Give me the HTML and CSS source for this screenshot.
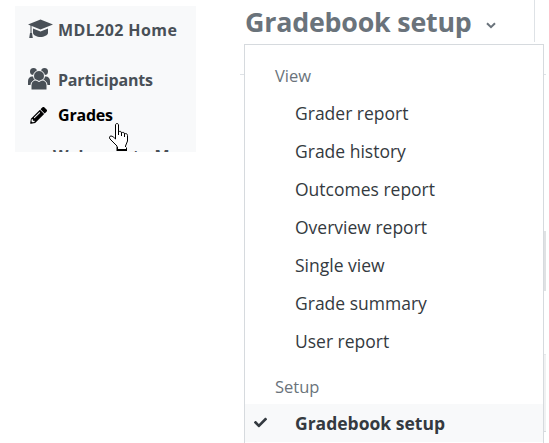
FILE: index.html
```html
<!DOCTYPE html>
<html lang="en">
<head>
  <meta charset="UTF-8" />
  <title>Gradebook setup</title>
  <link rel="stylesheet" href="styles.css">
</head>
<body>
  <aside class="sidebar">
    <a class="side-link home" href="#">
      <svg class="side-icon hat" viewBox="0 0 25 19"><path d="M12.500 .5 25 5.500 12.500 10.500 0 5.500z"/><path d="M5 9.500 12.500 12.500 20 9.500V14c0 2-4 4-7.500 4S5 16 5 14z"/><path d="M2.500 6h1v8h-1z"/><path d="M2 14h2l.8 5H1.200z"/></svg>
      <span>MDL202 Home</span>
    </a>
    <a class="side-link people" href="#">
      <svg class="side-icon group" viewBox="0 0 22 23"><circle cx="5.500" cy="4.500" r="3.500"/><circle cx="16.500" cy="4.500" r="3.500"/><path d="M0 18v-4c0-3 2-4.500 4-4.500h3V18z"/><path d="M22 18v-4c0-3-2-4.500-4-4.500h-3V18z"/><circle class="front" cx="11" cy="9" r="5.500"/><path class="front" d="M3 23v-5c0-3 2.500-5 5-5l3 1.500 3-1.500c2.500 0 5 2 5 5v5z"/></svg>
      <span>Participants</span>
    </a>
    <a class="side-link current" href="#">
      <svg class="side-icon pencil" viewBox="0 0 512 512"><path d="M497 75 437 15a48 48 0 0 0-68 0l-46 46a12 12 0 0 0 0 17l111 111a12 12 0 0 0 17 0l46-46a48 48 0 0 0 0-68zM291 93 28 356 7 477a24 24 0 0 0 28 28l121-21 263-263a12 12 0 0 0 0-17L308 93a12 12 0 0 0-17 0zM125 332a14 14 0 0 1 0-20l154-154a14 14 0 0 1 20 20L145 332a14 14 0 0 1-20 0zm-36 84h48v36l-65 11-31-31 11-65h37z"/></svg>
      <span>Grades</span>
    </a>
    <a class="side-link clipped" href="#">
      <svg class="side-icon bumps" viewBox="0 0 14 6"><circle cx="2" cy="3" r="2"/><circle cx="12" cy="3" r="2"/></svg>
      <span>Welcome to M</span>
    </a>
    <svg class="pointer" viewBox="0 0 21 29"><path d="M6.500 16V2c0-2 3-2 3 0v7c1-1 3-1 3 1 1-1 3-1 3 1 1-.8 3-.5 3 1.500V18l-2 5v1.500H8V23L1 16c-1-1.500-.5-3 1-3 1.500 0 3 1.500 4.500 3z" fill="#fff" stroke="#000"/><path d="M9.500 9v3M12.500 10v3M15.500 11v3" fill="none" stroke="#000"/><path d="M7.500 24.500H18V28H7.500z"/><path d="M9 24h8v2H9z" fill="#fff"/></svg>
  </aside>

  <main class="content">
    <h2 class="page-title">Gradebook setup
      <svg class="caret" viewBox="0 0 10 7"><path d="M1 1.200 5 5.200l4-4" fill="none" stroke="currentColor" stroke-width="2"/></svg>
    </h2>
    <div class="rule-top"></div>
    <div class="rule-mid"></div>
    <div class="panel-edge upper"></div>
    <div class="panel-edge lower"></div>

    <div class="menu">
      <div class="menu-head">View</div>
      <a class="menu-item" href="#">Grader report</a>
      <a class="menu-item" href="#">Grade history</a>
      <a class="menu-item" href="#">Outcomes report</a>
      <a class="menu-item" href="#">Overview report</a>
      <a class="menu-item" href="#">Single view</a>
      <a class="menu-item" href="#">Grade summary</a>
      <a class="menu-item" href="#">User report</a>
      <div class="menu-head second">Setup</div>
      <a class="menu-item selected" href="#">
        <svg class="check" viewBox="0 0 512 512"><path d="M174 439 7 273a26 26 0 0 1 0-36l36-36a26 26 0 0 1 36 0l113 112L433 73a26 26 0 0 1 36 0l36 36a26 26 0 0 1 0 36L210 439a26 26 0 0 1-36 0z"/></svg>
        Gradebook setup
      </a>
    </div>
  </main>
</body>
</html>
```
FILE: styles.css
```css
* {
  box-sizing: border-box;
}

html,
body {
  height: 443px;
}

body {
  margin: 0;
  position: relative;
  overflow: hidden;
  background: #fff;
  color: #343a40;
  font-family: "Open Sans", "Noto Sans", sans-serif;
  display: flex;
  align-items: flex-start;
}

a {
  text-decoration: none;
  color: inherit;
}

.sidebar {
  position: relative;
  width: 181px;
  height: 146px;
  margin: 6px 0 0 15px;
  padding: 12px 13px 0;
  background: #f8f9fa;
  overflow: hidden;
  flex-shrink: 0;
}

.side-link {
  display: flex;
  align-items: center;
  height: 24px;
  color: #495057;
  font-size: 16px;
  font-weight: 700;
  letter-spacing: -0.2px;
}

.side-icon {
  fill: currentColor;
  flex-shrink: 0;
}

.hat {
  width: 25px;
  height: 19px;
  margin: 0 5px 3px 0;
}

.home {
  letter-spacing: 0.4px;
}

.group {
  width: 22px;
  height: 23px;
  margin: 0 8px 3px 0;
}

.group .front {
  stroke: #f8f9fa;
  stroke-width: 1;
}

.pencil {
  width: 17px;
  height: 17px;
  margin: 0 11px 0 2px;
}

.bumps {
  width: 14px;
  height: 6px;
  margin: 0 12px 0 -1px;
}

.people {
  margin-top: 26px;
}

.current {
  margin-top: 11px;
  color: #000;
}

.clipped {
  margin-top: 17px;
  letter-spacing: 0.3px;
}

.pointer {
  position: absolute;
  left: 94px;
  top: 117px;
  width: 21px;
  height: 29px;
}

.content {
  position: relative;
  flex: 1;
  height: 443px;
  margin-left: 48px;
}

.page-title {
  display: flex;
  align-items: center;
  margin: 4px 0 0 1px;
  color: #6a737b;
  font-size: 26.800px;
  font-weight: 700;
  line-height: 36px;
  letter-spacing: -0.2px;
  white-space: nowrap;
}

.caret {
  width: 10px;
  height: 7px;
  margin: 6px 0 0 14px;
}

.rule-top {
  position: absolute;
  left: 290px;
  top: 0;
  width: 1px;
  height: 42px;
  background: #dee2e6;
}

.rule-mid {
  position: absolute;
  left: -4px;
  width: 306px;
  top: 74px;
  height: 1px;
  background: #dee2e6;
}

.panel-edge {
  position: absolute;
  right: 3px;
  width: 3px;
}

.upper {
  top: 231px;
  height: 60px;
  background: #e0e2e4;
}

.lower {
  top: 354px;
  height: 78px;
  background: #f1f2f3;
  border-top: 1px solid #e6e8ea;
  border-bottom: 1px solid #d6dade;
}

.menu {
  position: absolute;
  left: 0;
  top: 44px;
  width: 300px;
  height: 399px;
  padding-top: 12px;
  background: #fff;
  border: 1px solid #d6dade;
  border-bottom: 0;
}

.menu-head {
  height: 38px;
  padding-left: 30px;
  color: #6a737b;
  font-size: 16.500px;
  line-height: 38px;
}

.menu-head.second {
  height: 24px;
  margin-top: 14px;
  line-height: 24px;
}

.menu-item {
  position: relative;
  display: block;
  height: 38px;
  padding-left: 50px;
  color: #343a40;
  font-size: 17.500px;
  line-height: 36px;
}

.selected {
  margin-top: 5px;
  background: #f8f9fa;
  font-weight: 700;
  line-height: 38px;
}

.check {
  position: absolute;
  left: 9px;
  top: 12px;
  width: 13px;
  height: 13px;
  fill: #343a40;
}
```
